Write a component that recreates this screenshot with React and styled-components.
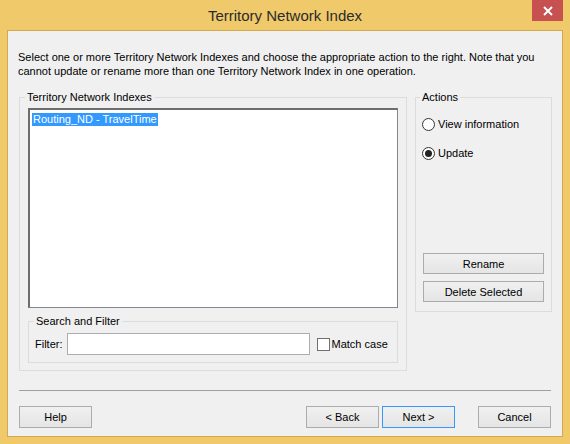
import React, { useState } from 'react';
import styled, { createGlobalStyle } from 'styled-components';

const Global = createGlobalStyle`
  html, body { margin: 0; padding: 0; background: #f0c96b; }
  * { box-sizing: border-box; }
`;

const FONT = `"Liberation Sans", Arial, sans-serif`;

const Frame = styled.div`
  width: 570px;
  height: 444px;
  background: #f0c96b;
  padding: 0 7px 7px 7px;
  display: flex;
  flex-direction: column;
  font-family: ${FONT};
  font-size: 11px;
  color: #000;
`;

const TitleBar = styled.div`
  height: 30px;
  display: grid;
  grid-template-columns: 1fr auto 1fr;
  align-items: start;
`;

const Title = styled.div`
  grid-column: 2;
  font-size: 15px;
  line-height: 20px;
  padding-top: 6px;
  color: #2b2b2b;
`;

const CloseBtn = styled.div`
  grid-column: 3;
  justify-self: end;
  width: 31px;
  height: 21px;
  background: #c75050;
  display: flex;
  align-items: center;
  justify-content: center;
`;

const Client = styled.div`
  flex: 1;
  background: #f0f0f0;
  border: 1px solid #d4a94e;
  padding: 0 10px 7px 10px;
  display: flex;
  flex-direction: column;
`;

const Intro = styled.p`
  margin: 19px 0 0 0;
  line-height: 14px;
`;

const Main = styled.div`
  display: flex;
  align-items: flex-start;
  gap: 8px;
  margin: 12px 0 0 1px;
`;

const Group = styled.fieldset`
  margin: 0;
  min-width: 0;
  border: 1px solid #dcdcdc;
  padding: ${p => p.$pad || '3px 8px 7px 8px'};
  width: ${p => p.$w || 'auto'};
  height: ${p => p.$h || 'auto'};
  display: flex;
  flex-direction: column;
`;

const Legend = styled.legend`
  padding: 0 2px;
  margin-left: ${p => p.$lm || '0'};
  line-height: 14px;
`;

const ListBox = styled.div`
  height: 200px;
  background: #fff;
  border: 1px solid #828790;
  border-top: 2px solid #6d6d6d;
  border-left: 2px solid #6d6d6d;
  padding: 3px 2px;
`;

const ListItem = styled.span`
  display: inline-block;
  line-height: 13px;
  padding: 0 1px;
  background: ${p => (p.$selected ? '#3399ff' : 'transparent')};
  color: ${p => (p.$selected ? '#fff' : '#000')};
`;

const FilterRow = styled.div`
  display: flex;
  align-items: center;
`;

const FilterLabel = styled.label`
  margin-right: 4px;
`;

const TextBox = styled.input`
  width: 243px;
  height: 22px;
  border: 1px solid #abadb3;
  background: #fff;
  font: inherit;
  padding: 0 3px;
  outline: none;
`;

const CheckLabel = styled.label`
  display: flex;
  align-items: center;
  gap: 2px;
  margin-left: 7px;
  white-space: nowrap;
`;

const Box = styled.span`
  width: 13px;
  height: 13px;
  border: 1px solid #707070;
  background: #fff;
`;

const RadioRow = styled.label`
  display: flex;
  align-items: center;
  gap: 3px;
  height: 16px;
  margin-top: ${p => p.$mt || '0'};
`;

const RadioDot = styled.span`
  width: 13px;
  height: 13px;
  border-radius: 50%;
  border: 1px solid #333;
  background: #fff;
  display: flex;
  align-items: center;
  justify-content: center;
  &::after {
    content: '';
    width: 7px;
    height: 7px;
    border-radius: 50%;
    background: ${p => (p.$checked ? '#222' : 'transparent')};
  }
`;

const Button = styled.button`
  width: ${p => p.$w || '73px'};
  height: ${p => p.$h || '22px'};
  border: 1px solid ${p => (p.$default ? '#3399ff' : '#acacac')};
  background: linear-gradient(#f0f0f0, #e5e5e5);
  font-family: ${FONT};
  font-size: 11px;
  color: #000;
  padding: 0;
  margin-left: ${p => p.$ml || '0'};
`;

const ActionButtons = styled.div`
  margin-top: auto;
  display: flex;
  flex-direction: column;
  gap: 7px;
  padding-left: 1px;
`;

const Separator = styled.div`
  margin: 19px 1px 0 1px;
  border-top: 1px solid #a0a0a0;
`;

const Footer = styled.div`
  display: flex;
  margin: 15px 1px 0 1px;
`;

const Spacer = styled.div`
  flex: 1;
`;

export default function App() {
  const [action, setAction] = useState('update');
  return (
    <Frame>
      <Global />
      <TitleBar>
        <Title>Territory Network Index</Title>
        <CloseBtn>
          <svg width="10" height="10" viewBox="0 0 10 10">
            <path d="M1 1 L9 9 M9 1 L1 9" stroke="#fff" strokeWidth="2" />
          </svg>
        </CloseBtn>
      </TitleBar>
      <Client>
        <Intro>
          Select one or more Territory Network Indexes and choose the appropriate action to the right. Note that you
          cannot update or rename more than one Territory Network Index in one operation.
        </Intro>
        <Main>
          <Group $w="388px" $pad="4px 8px 7px 8px">
            <Legend $lm="-3px">Territory Network Indexes</Legend>
            <ListBox>
              <ListItem $selected>Routing_ND - TravelTime</ListItem>
            </ListBox>
            <Group $pad="5px 6px 7px 6px" style={{ marginTop: 6 }}>
              <Legend $lm="-1px">Search and Filter</Legend>
              <FilterRow>
                <FilterLabel>Filter:</FilterLabel>
                <TextBox />
                <CheckLabel>
                  <Box />
                  Match case
                </CheckLabel>
              </FilterRow>
            </Group>
          </Group>
          <Group $w="137px" $h="222px" $pad="10px 7px 9px 6px">
            <Legend $lm="-2px">Actions</Legend>
            <RadioRow $mt="2px" onClick={() => setAction('view')}>
              <RadioDot $checked={action === 'view'} />
              View information
            </RadioRow>
            <RadioRow $mt="13px" onClick={() => setAction('update')}>
              <RadioDot $checked={action === 'update'} />
              Update
            </RadioRow>
            <ActionButtons>
              <Button $w="121px" $h="21px">Rename</Button>
              <Button $w="121px" $h="21px">Delete Selected</Button>
            </ActionButtons>
          </Group>
        </Main>
        <Separator />
        <Footer>
          <Button>Help</Button>
          <Spacer />
          <Button>&lt; Back</Button>
          <Button $default $ml="3px">Next &gt;</Button>
          <Button $ml="23px">Cancel</Button>
        </Footer>
      </Client>
    </Frame>
  );
}
